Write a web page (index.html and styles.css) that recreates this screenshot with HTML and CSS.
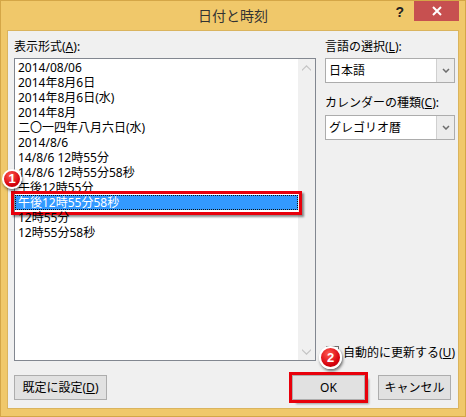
FILE: index.html
```html
<!DOCTYPE html>
<html lang="ja">
<head>
<meta charset="utf-8">
<link rel="stylesheet" href="styles.css">
</head>
<body>
<div class="window">
  <div class="titlebar">
    <div></div>
    <div class="title">日付と時刻</div>
    <div class="controls">
      <span class="help">?</span>
      <span class="close"><svg width="10" height="10" viewBox="0 0 10 10"><path d="M1 1L9 9M9 1L1 9" stroke="#fff" stroke-width="2"/></svg></span>
    </div>
  </div>
  <div class="client">
    <div class="main">
      <div class="left">
        <div class="label">表示形式(<u>A</u>):</div>
        <div class="listbox">
          <ul class="items">
            <li>2014/08/06</li>
            <li>2014年8月6日</li>
            <li>2014年8月6日(水)</li>
            <li>2014年8月</li>
            <li>二〇一四年八月六日(水)</li>
            <li>2014/8/6</li>
            <li>14/8/6 12時55分</li>
            <li>14/8/6 12時55分58秒</li>
            <li>午後12時55分</li>
            <li class="selected">午後12時55分58秒</li>
            <li>12時55分</li>
            <li>12時55分58秒</li>
          </ul>
          <div class="scrollbar">
            <span class="arrow"><svg width="9" height="6" viewBox="0 0 9 6"><path d="M0 4.5L4.5 0L9 4.5L9 6L4.5 1.8L0 6Z" fill="#c4c4c4"/></svg></span>
            <span class="arrow"><svg width="9" height="6" viewBox="0 0 9 6"><path d="M0 1.5L4.5 6L9 1.5L9 0L4.5 4.2L0 0Z" fill="#c4c4c4"/></svg></span>
          </div>
        </div>
      </div>
      <div class="right">
        <div class="label">言語の選択(<u>L</u>):</div>
        <div class="combo">
          <span class="combo-text">日本語</span>
          <span class="combo-btn"><svg width="8" height="5" viewBox="0 0 8 5"><path d="M1 1L4 4L7 1" stroke="#6d6d6d" stroke-width="1.5" fill="none"/></svg></span>
        </div>
        <div class="label label2">カレンダーの種類(<u>C</u>):</div>
        <div class="combo combo2">
          <span class="combo-text">グレゴリオ暦</span>
          <span class="combo-btn"><svg width="8" height="5" viewBox="0 0 8 5"><path d="M1 1L4 4L7 1" stroke="#6d6d6d" stroke-width="1.5" fill="none"/></svg></span>
        </div>
        <div class="check-row">
          <span class="checkbox"></span>
          <span>自動的に更新する(<u>U</u>)</span>
        </div>
      </div>
    </div>
    <div class="buttons">
      <button class="btn btn-default">既定に設定(<u>D</u>)</button>
      <button class="btn btn-ok">OK</button>
      <button class="btn btn-cancel">キャンセル</button>
    </div>
  </div>
  <span class="badge badge1">1</span>
  <span class="badge badge2">2</span>
</div>
</body>
</html>
```
FILE: styles.css
```css
html, body {
  margin: 0;
  padding: 0;
  background: #f0c86a;
}
body {
  font-family: "Noto Sans", "Noto Sans CJK JP", sans-serif;
  font-size: 12px;
  color: #000;
}
.window {
  position: relative;
  width: 466px;
  height: 417px;
  box-sizing: border-box;
  border: 1px solid #d4a647;
  background: #f0c86a;
  display: flex;
  flex-direction: column;
}
.titlebar {
  height: 29px;
  display: grid;
  grid-template-columns: 1fr auto 1fr;
}
.title {
  font-family: "Noto Sans CJK JP", sans-serif;
  font-size: 14px;
  line-height: 29px;
  color: #333;
}
.controls {
  justify-self: end;
  display: flex;
  align-items: flex-start;
  margin-right: 6px;
}
.help {
  font-family: "Liberation Sans", sans-serif;
  font-weight: bold;
  font-size: 14px;
  line-height: 20px;
  color: #222;
  margin-right: 10px;
  margin-top: 1px;
}
.close {
  width: 45px;
  height: 20px;
  background: #c75050;
  display: flex;
  align-items: center;
  justify-content: center;
}
.close svg { display: block; }
.client {
  flex: 1;
  margin: 0 6px 7px 6px;
  background: #f0f0f0;
  border: 1px solid #dab45e;
  padding: 8px 7px 8px 6px;
  display: flex;
  flex-direction: column;
}
.main {
  flex: 1;
  display: grid;
  grid-template-columns: 302px 1fr;
  column-gap: 9px;
}
.left {
  display: flex;
  flex-direction: column;
}
.label {
  height: 16px;
  line-height: 16px;
  white-space: nowrap;
}
.listbox {
  margin-top: 3px;
  flex: 1;
  border: 1px solid #828790;
  background: #fff;
  display: flex;
}
.items {
  flex: 1;
  list-style: none;
  margin: 0;
  padding: 1px 0 0 0;
}
.items li {
  position: relative;
  height: 15px;
  line-height: 15px;
  padding-left: 3px;
  white-space: nowrap;
}
.items li.selected {
  background: #3399ff;
  color: #fff;
  outline: 1px dotted #111;
  outline-offset: -1px;
}
.items li.selected::after {
  content: "";
  position: absolute;
  left: -4px;
  right: -4px;
  top: -4px;
  bottom: -5px;
  border: 3px solid #e8000b;
  box-shadow: 2px 2px 2px rgba(0,0,0,0.45);
}
.scrollbar {
  width: 17px;
  background: #f0f0f0;
  display: flex;
  flex-direction: column;
  justify-content: space-between;
}
.arrow {
  height: 17px;
  display: flex;
  align-items: center;
  justify-content: center;
}
.arrow svg { display: block; }
.right {
  display: flex;
  flex-direction: column;
}
.combo {
  margin-top: 3px;
  height: 25px;
  box-sizing: border-box;
  border: 1px solid #acacac;
  background: #fff;
  display: flex;
}
.combo-text {
  flex: 1;
  padding-left: 3px;
  line-height: 23px;
}
.combo-btn {
  width: 17px;
  background: #ececec;
  border-left: 1px solid #d0d0d0;
  display: flex;
  align-items: center;
  justify-content: center;
}
.label2 {
  margin-top: 12px;
}
.combo2 {
  margin-top: 4px;
}
.check-row {
  margin-top: auto;
  margin-bottom: 1px;
  height: 16px;
  display: flex;
  align-items: center;
  gap: 4px;
  white-space: nowrap;
}
.checkbox {
  width: 11px;
  height: 11px;
  border: 1px solid #707070;
  background: #fff;
  margin-left: 1px;
}
.buttons {
  margin-top: 14px;
  display: flex;
  gap: 13px;
}
.btn {
  height: 25px;
  box-sizing: border-box;
  border: 1px solid #adadad;
  background: #e1e1e1;
  font-family: "Noto Sans", "Noto Sans CJK JP", sans-serif;
  font-size: 12px;
  color: #000;
  padding: 0;
  line-height: 22px;
}
.btn-default {
  width: 93px;
  margin-right: auto;
}
.btn-ok {
  width: 73px;
  outline: 3px solid #e8000b;
  outline-offset: 0;
  box-shadow: 4px 4px 2px rgba(0,0,0,0.35);
}
.btn-cancel {
  width: 73px;
}
.badge {
  position: absolute;
  box-sizing: border-box;
  border: 2px solid #fff;
  border-radius: 50%;
  background: radial-gradient(circle at 40% 30%, #ff5b4f, #d6000c 65%, #a80008);
  box-shadow: 1px 2px 3px rgba(0,0,0,0.55);
  color: #fff;
  font-family: "Liberation Sans", sans-serif;
  font-weight: bold;
  text-align: center;
}
.badge1 {
  left: 1px;
  top: 168px;
  width: 20px;
  height: 20px;
  font-size: 13px;
  line-height: 16px;
}
.badge2 {
  left: 318px;
  top: 345px;
  width: 23px;
  height: 23px;
  font-size: 13px;
  line-height: 19px;
}
```
